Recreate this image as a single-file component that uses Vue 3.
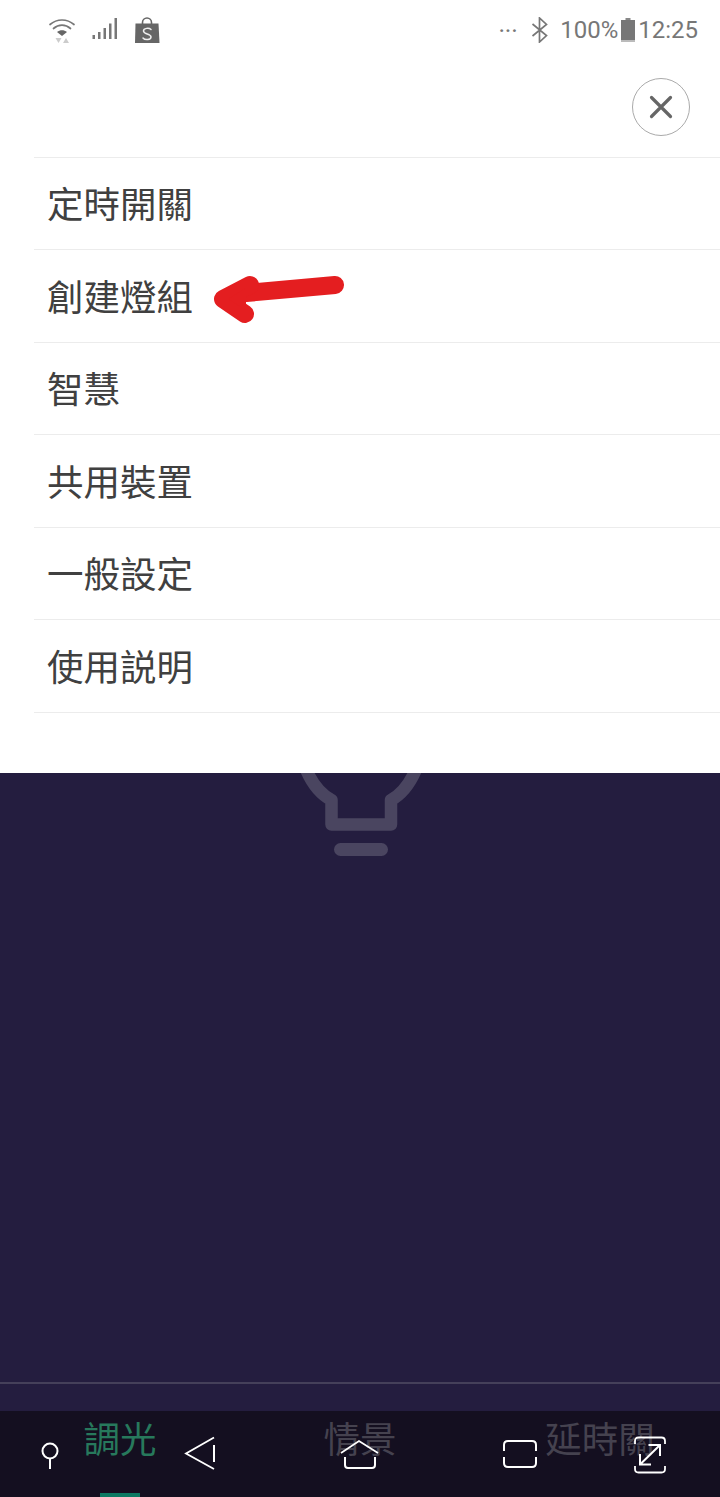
<script setup>
// 抽屜選單：上半為白色選單，下半為深色主畫面
const menuItems = ['定時開關', '創建燈組', '智慧', '共用裝置', '一般設定', '使用説明']
const tabs = [
  { name: '調光', active: true },
  { name: '情景', active: false },
  { name: '延時關', active: false }
]
</script>

<template>
  <div class="page">
    <section class="sheet">
      <header class="status">
        <div class="status-left">
          <svg class="ic-wifi" width="28" height="28" viewBox="0 0 28 28" fill="none">
            <path d="M2 8.500C9 2.500 19 2.500 26 8.500" stroke="#777" stroke-width="1.700" stroke-linecap="round" />
            <path d="M5.500 12.500C10.500 8 17.500 8 22.500 12.500" stroke="#777" stroke-width="1.700" stroke-linecap="round" />
            <path d="M9 16C12 13.500 16 13.500 19 16L14 20Z" fill="#666" />
            <path d="M7.500 22H13.500L10.500 27Z" fill="#ccc" />
            <path d="M15 27L18 22L21 27Z" fill="#ccc" />
          </svg>
          <svg class="ic-signal" width="26" height="24" viewBox="0 0 26 24">
            <rect x="0.500" y="17" width="2.500" height="4" fill="#777" />
            <rect x="6" y="14" width="2.500" height="7" fill="#777" />
            <rect x="11.500" y="10" width="2.500" height="11" fill="#777" />
            <rect x="17" y="5.500" width="2.500" height="15.500" fill="#777" />
            <rect x="22.500" y="0" width="2.500" height="21" fill="#777" />
          </svg>
          <svg class="ic-shop" width="26" height="28" viewBox="0 0 26 28">
            <path d="M8.500 8V6.500a4.500 4.500 0 0 1 9 0V8" fill="none" stroke="#666" stroke-width="1.600" />
            <path d="M1.500 7.500H24.500L25.500 27H1Z" fill="#666" />
            <path d="M17 13.500C15 11.500 9.500 12 9.500 15C9.500 18.500 17 17.500 17 21C17 24 11 24.500 9 22" fill="none" stroke="#eee" stroke-width="1.500" stroke-linecap="round" />
          </svg>
        </div>
        <div class="status-right">
          <span class="dots">···</span>
          <svg class="ic-bt" width="20" height="26" viewBox="0 0 20 26" fill="none">
            <path d="M2.500 7L16.500 18.500L9.500 25V1L16.500 7.500L2.500 19" stroke="#777" stroke-width="1.700" />
          </svg>
          <span class="pct">100%</span>
          <svg class="ic-batt" width="14" height="25" viewBox="0 0 14 25">
            <rect x="4.500" y="0" width="5" height="2" fill="#888" />
            <rect x="0" y="2" width="14" height="22" fill="#777" />
            <rect x="0" y="22" width="14" height="2" fill="#bbb" />
          </svg>
          <span class="clock">12:25</span>
        </div>
      </header>

      <div class="close-row">
        <button class="close-btn" type="button">
          <svg width="24" height="24" viewBox="0 0 24 24" fill="none">
            <path d="M2.500 2.500L21.500 21.500M21.500 2.500L2.500 21.500" stroke="#666" stroke-width="3.200" stroke-linecap="round" />
          </svg>
        </button>
      </div>

      <ul class="menu">
        <li v-for="item in menuItems" :key="item" class="menu-item">{{ item }}</li>
      </ul>

      <!-- 手繪紅色箭頭 -->
      <svg class="arrow" width="140" height="60" viewBox="0 0 140 60" fill="none">
        <path d="M129 13L40 21" stroke="#e41e20" stroke-width="18" stroke-linecap="round" />
        <path d="M44 13L17 27L39 42" stroke="#e41e20" stroke-width="18" stroke-linecap="round" stroke-linejoin="round" />
        <path d="M40 16L22 27L40 38Z" fill="#e41e20" />
      </svg>
    </section>

    <main class="dark">
      <svg class="bulb" width="140" height="90" viewBox="0 0 140 90" fill="none">
        <path d="M13.500 -10C20 8 28 20 41.500 27V51.500H101V27C114 20 122 8 128.500 -10" stroke="#4a4560" stroke-width="12.500" stroke-linejoin="round" />
        <rect x="44" y="70" width="54" height="13" rx="6.500" fill="#4a4560" />
      </svg>
      <div class="spacer"></div>
      <div class="rule"></div>
      <div class="rule-gap"></div>
    </main>

    <nav class="tabs">
      <div v-for="tab in tabs" :key="tab.name" class="tab" :class="{ active: tab.active }">
        <span class="tab-label">{{ tab.name }}</span>
        <i v-if="tab.active" class="tab-bar"></i>
      </div>

      <!-- 系統導覽列，疊在分頁上 -->
      <div class="sys-nav">
        <svg class="sys sys-pin" width="20" height="30" viewBox="0 0 20 30" fill="none">
          <circle cx="10" cy="10" r="7.500" stroke="#fff" stroke-width="2" />
          <path d="M10 18V28" stroke="#fff" stroke-width="2" />
        </svg>
        <svg class="sys sys-back" width="32" height="34" viewBox="0 0 32 34" fill="none">
          <path d="M30 1.500L2 17.500L30 33" stroke="#fff" stroke-width="1.800" />
          <path d="M30 9V26" stroke="#fff" stroke-width="2" />
        </svg>
        <svg class="sys sys-home" width="40" height="32" viewBox="0 0 40 32" fill="none">
          <path d="M1 14L19 2L38 14" stroke="#fff" stroke-width="1.800" />
          <path d="M5 18V26Q5 29 8 29H32Q35 29 35 26V18" stroke="#fff" stroke-width="2" />
        </svg>
        <svg class="sys sys-recent" width="36" height="30" viewBox="0 0 36 30" fill="none">
          <path d="M2 12V6Q2 2 6 2H30Q34 2 34 6V12M2 18V24Q2 28 6 28H30Q34 28 34 24V18" stroke="#fff" stroke-width="2" />
        </svg>
        <svg class="sys sys-expand" width="32" height="38" viewBox="0 0 32 38" fill="none">
          <path d="M1 8V5Q1 1.500 4.500 1.500H27.500Q31 1.500 31 5V8M1 30V33Q1 36.500 4.500 36.500H27.500Q31 36.500 31 33V30" stroke="#fff" stroke-width="1.800" />
          <path d="M6 28.500L26 9M14.500 9H26V20M6 18V28.500H17" stroke="#fff" stroke-width="2" />
        </svg>
      </div>
    </nav>
  </div>
</template>

<style>
html, body { margin: 0; padding: 0; background: #241d3f; }
</style>

<style scoped>
.page {
  width: 720px; height: 1497px; display: flex; flex-direction: column; overflow: hidden;
  font-family: "Noto Sans CJK TC", "Noto Sans", sans-serif;
}

/* 白色選單 */
.sheet { position: relative; height: 773px; background: #fff; flex: none; }
.status {
  height: 60px; display: flex; justify-content: space-between; align-items: center;
  box-sizing: border-box; padding: 0 22px 0 48px;
}
.status-left { display: flex; align-items: center; }
.ic-signal { margin-left: 16px; }
.ic-shop { margin-left: 16px; }
.status-right {
  display: flex; align-items: center; color: #777;
  font-family: Roboto, "Liberation Sans", sans-serif; font-size: 24px;
}
.dots { margin-right: 12px; font-size: 18px; font-weight: 700; letter-spacing: 1px; }
.ic-bt { margin-right: 10px; }
.ic-batt { margin: 0 3px 0 3px; }

.close-row { height: 96.500px; display: flex; justify-content: flex-end; align-items: flex-start; box-sizing: border-box; padding: 18px 30px 0 0; }
.close-btn {
  width: 58px; height: 58px; padding: 0; border: 1px solid #aaa; border-radius: 50%;
  background: #fff; display: flex; align-items: center; justify-content: center;
}

.menu { list-style: none; margin: 0 0 0 34px; padding: 0; border-top: 1px solid #ececec; }
.menu-item {
  height: 92.600px; box-sizing: border-box; border-bottom: 1px solid #ececec;
  display: flex; align-items: center; padding: 0 0 0 13px;
  font-size: 36.500px; color: #404040; line-height: 1;
}
.arrow { position: absolute; left: 206px; top: 272px; }

/* 深色主畫面 */
.dark { position: relative; flex: 1; display: flex; flex-direction: column; background: #241d3f; }
.bulb { position: absolute; left: 290px; top: 0; }
.spacer { flex: 1; }
.rule { height: 2px; background: #45405a; }
.rule-gap { height: 27px; }

/* 底部分頁 */
.tabs { position: relative; height: 86px; flex: none; display: flex; background: #140f20; }
.tab { position: relative; flex: 1; display: flex; justify-content: center; padding-top: 3px; }
.tab-label { font-size: 36.500px; line-height: 48px; color: #45424f; }
.tab.active .tab-label { color: #27795c; }
.tab-bar { position: absolute; left: 50%; bottom: 0; width: 40px; height: 4px; margin-left: -20px; background: #0b7a62; }

.sys-nav { position: absolute; inset: 0; }
.sys { position: absolute; }
.sys-pin { left: 40px; top: 30px; }
.sys-back { left: 184px; top: 25px; }
.sys-home { left: 340px; top: 28px; }
.sys-recent { left: 502px; top: 28px; }
.sys-expand { left: 634px; top: 25px; }
</style>
